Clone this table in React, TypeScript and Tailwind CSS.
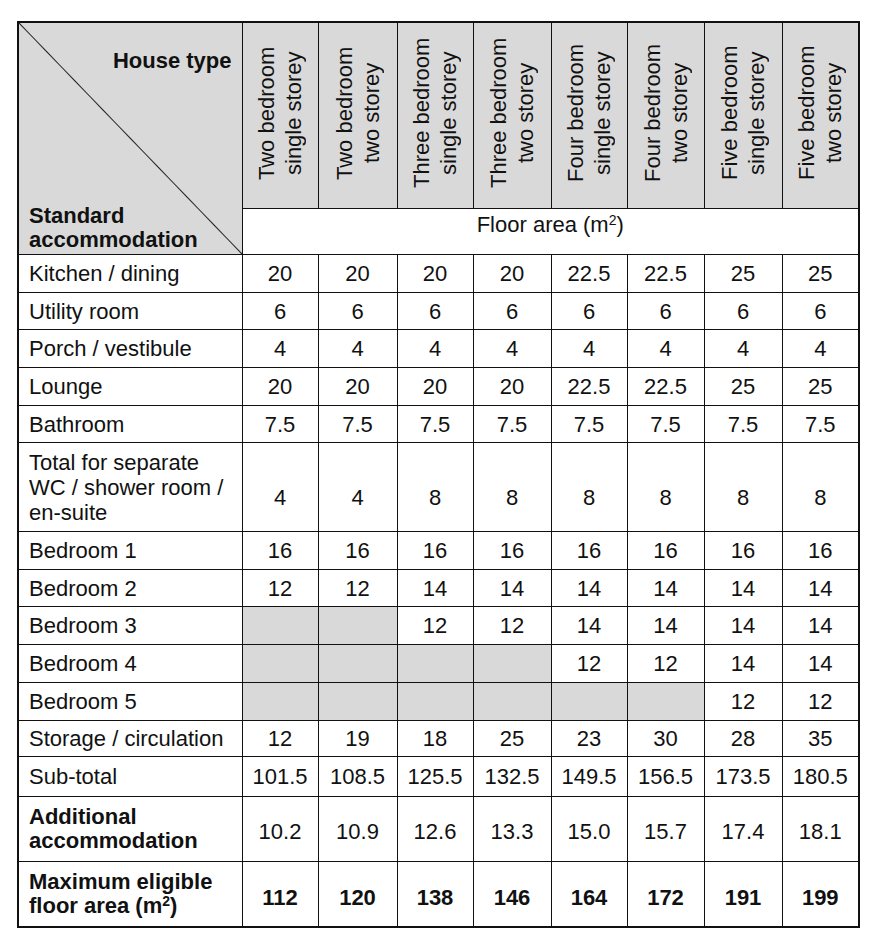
import React from 'react';

const houseTypes = [
  ['Two bedroom', 'single storey'],
  ['Two bedroom', 'two storey'],
  ['Three bedroom', 'single storey'],
  ['Three bedroom', 'two storey'],
  ['Four bedroom', 'single storey'],
  ['Four bedroom', 'two storey'],
  ['Five bedroom', 'single storey'],
  ['Five bedroom', 'two storey'],
];

const colWidths = ['w-[76px]', 'w-[79px]', 'w-[76px]', 'w-[78px]', 'w-[76px]', 'w-[77px]', 'w-[78px]', 'w-[77px]'];

type Row = {
  label: React.ReactNode;
  values: (string | null)[];
  height: string;
  bold?: boolean;
  boldValues?: boolean;
  valuePad?: string;
};

const rows: Row[] = [
  { label: 'Kitchen / dining', values: ['20', '20', '20', '20', '22.5', '22.5', '25', '25'], height: 'h-[38px]' },
  { label: 'Utility room', values: ['6', '6', '6', '6', '6', '6', '6', '6'], height: 'h-[37px]' },
  { label: 'Porch / vestibule', values: ['4', '4', '4', '4', '4', '4', '4', '4'], height: 'h-[38px]' },
  { label: 'Lounge', values: ['20', '20', '20', '20', '22.5', '22.5', '25', '25'], height: 'h-[38px]' },
  { label: 'Bathroom', values: ['7.5', '7.5', '7.5', '7.5', '7.5', '7.5', '7.5', '7.5'], height: 'h-[37px]' },
  {
    label: (
      <>
        Total for separate
        <br />
        WC / shower room /
        <br />
        en-suite
      </>
    ),
    values: ['4', '4', '8', '8', '8', '8', '8', '8'],
    height: 'h-[89px]',
    valuePad: 'pt-[20px]',
  },
  { label: 'Bedroom 1', values: ['16', '16', '16', '16', '16', '16', '16', '16'], height: 'h-[38px]' },
  { label: 'Bedroom 2', values: ['12', '12', '14', '14', '14', '14', '14', '14'], height: 'h-[37px]' },
  { label: 'Bedroom 3', values: [null, null, '12', '12', '14', '14', '14', '14'], height: 'h-[38px]' },
  { label: 'Bedroom 4', values: [null, null, null, null, '12', '12', '14', '14'], height: 'h-[38px]' },
  { label: 'Bedroom 5', values: [null, null, null, null, null, null, '12', '12'], height: 'h-[38px]' },
  { label: 'Storage / circulation', values: ['12', '19', '18', '25', '23', '30', '28', '35'], height: 'h-[36px]' },
  {
    label: 'Sub-total',
    values: ['101.5', '108.5', '125.5', '132.5', '149.5', '156.5', '173.5', '180.5'],
    height: 'h-[40px]',
  },
  {
    label: (
      <>
        Additional
        <br />
        accommodation
      </>
    ),
    values: ['10.2', '10.9', '12.6', '13.3', '15.0', '15.7', '17.4', '18.1'],
    height: 'h-[65px]',
    bold: true,
    valuePad: 'pt-[4px]',
  },
  {
    label: (
      <>
        Maximum eligible
        <br />
        floor area (m<sup className="text-[14px]">2</sup>)
      </>
    ),
    values: ['112', '120', '138', '146', '164', '172', '191', '199'],
    height: 'h-[65px]',
    bold: true,
    boldValues: true,
    valuePad: 'pt-[8px]',
  },
];

const App = () => {
  return (
    <div className="min-h-[938px] bg-white pl-[17px] pt-[21px] font-['Liberation_Sans',Arial,sans-serif] text-[22px] leading-[25px] text-[#111]">
      <table className="w-[842px] table-fixed border-collapse border-2 border-[#111]">
        <colgroup>
          <col className="w-[224px]" />
          {colWidths.map((w, i) => (
            <col key={i} className={w} />
          ))}
        </colgroup>
        <tbody>
          <tr className="h-[185px]">
            {/* Corner cell with diagonal split */}
            <td
              rowSpan={2}
              className="border border-[#111] bg-[linear-gradient(to_top_right,#d9d9d9_calc(50%-1px),#222_50%,#d9d9d9_calc(50%+1px))] p-0 align-top"
            >
              <div className="flex h-[230px] flex-col justify-between px-[10px] font-bold">
                <div className="pt-[25px] text-right">House type</div>
                <div className="pb-[1px] leading-[24px]">
                  Standard
                  <br />
                  accommodation
                </div>
              </div>
            </td>
            {houseTypes.map(([a, b], i) => (
              <td key={i} className="border border-[#111] bg-[#d9d9d9] p-0 text-center align-middle">
                <div className="inline-block h-[180px] rotate-180 text-center leading-[27px] [writing-mode:vertical-rl]">
                  {a}
                  <br />
                  {b}
                </div>
              </td>
            ))}
          </tr>
          <tr className="h-[46px]">
            <td colSpan={8} className="border border-[#111] pt-[3px] text-center align-top">
              Floor area (m<sup className="text-[14px]">2</sup>)
            </td>
          </tr>
          {rows.map((row, ri) => (
            <tr key={ri} className={row.height}>
              <td
                className={`whitespace-nowrap border border-[#111] py-0 pl-[10px] pr-0 align-middle ${
                  row.bold ? 'font-bold leading-[24px]' : ''
                }`}
              >
                {row.label}
              </td>
              {row.values.map((v, ci) =>
                v === null ? (
                  <td key={ci} className="border border-[#111] bg-[#d9d9d9]" />
                ) : (
                  <td
                    key={ci}
                    className={`border border-[#111] px-0 text-center align-middle ${row.valuePad ?? 'py-0'} ${
                      row.boldValues ? 'font-bold' : ''
                    }`}
                  >
                    {v}
                  </td>
                )
              )}
            </tr>
          ))}
        </tbody>
      </table>
    </div>
  );
};

export default App;
